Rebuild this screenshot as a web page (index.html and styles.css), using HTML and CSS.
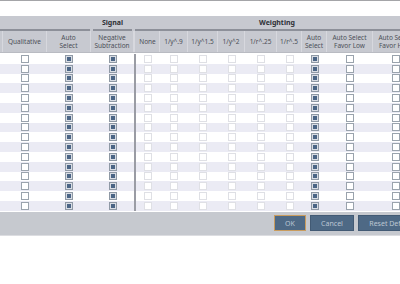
FILE: index.html
```html
<!DOCTYPE html>
<html lang="en">
<head>
  <meta charset="UTF-8" />
  <title>Calibration Settings</title>
  <link rel="stylesheet" href="styles.css">
</head>
<body>

<div class="dialog">
  <div class="top-gap"></div>

  <div class="head">
    <div class="groups">
      <div class="group group-first"></div>
      <div class="group group-signal">Signal</div>
      <div class="group-sep"></div>
      <div class="group group-weight">Weighting</div>
    </div>
    <div class="cols">
      <div class="col"></div>
      <div class="col">Qualitative</div>
      <div class="col">Auto<br>Select</div>
      <div class="col">Negative<br>Subtraction</div>
      <div class="col col-sep"></div>
      <div class="col">None</div>
      <div class="col">1/y^.9</div>
      <div class="col">1/y^1.5</div>
      <div class="col">1/y^2</div>
      <div class="col">1/r^.25</div>
      <div class="col">1/r^.5</div>
      <div class="col">Auto<br>Select</div>
      <div class="col">Auto Select<br>Favor Low</div>
      <div class="col">Auto Select<br>Favor High</div>
    </div>
  </div>

  <div class="rows" id="rows"></div>

  <div class="footer">
    <button class="btn btn-ok">OK</button>
    <button class="btn btn-cancel">Cancel</button>
    <button class="btn btn-reset">Reset Defaults</button>
  </div>
</div>

<script>
  const rows = document.getElementById('rows');
  // one entry per cell: '' empty, u unchecked, c checked, d disabled, s separator
  const cells = ['', 'u', 'c', 'c', 's', 'd', 'd', 'd', 'd', 'd', 'd', 'c', 'u', 'u'];

  for (let i = 0; i < 16; i++) {
    const row = document.createElement('div');
    row.className = 'row' + (i % 2 ? ' alt' : '');
    cells.forEach(type => {
      const cell = document.createElement('div');
      cell.className = type === 's' ? 'cell cell-sep' : 'cell';
      if (type && type !== 's') {
        const box = document.createElement('span');
        box.className = 'check ' + type;
        cell.appendChild(box);
      }
      row.appendChild(cell);
    });
    rows.appendChild(row);
  }
</script>

</body>
</html>
```

FILE: styles.css
```css
body {
  margin: 0;
  padding: 0;
  background: #fff;
  font-family: 'Noto Sans', 'Open Sans', sans-serif;
  overflow: hidden;
  height: 284px;
}

.dialog {
  width: 434px;
  border-top: 1px solid #a4a5a8;
}

.top-gap {
  height: 15px;
}

.head {
  background: #c7c9d0;
  border-bottom: 1px solid #b9bbc2;
}

.groups,
.cols,
.row {
  display: grid;
  grid-template-columns: 3px 44px 44px 43px 2px 24px 28px 30px 27px 32px 25px 25px 46px 46px;
}

.groups {
  height: 15px;
}

.group {
  height: 13px;
  border-bottom: 2px solid #8d9099;
  font-size: 7px;
  font-weight: bold;
  color: #2e3036;
  text-align: center;
  line-height: 14px;
}

.group-first {
  grid-column: 1 / 4;
  margin-right: 1px;
}

.group-signal {
  grid-column: 4 / 5;
  margin: 0 2px 0 2px;
}

.group-sep {
  grid-column: 5 / 6;
}

.group-weight {
  grid-column: 6 / 15;
  margin-left: -1px;
}

.cols {
  height: 21px;
}

.col {
  display: flex;
  align-items: center;
  justify-content: center;
  text-align: center;
  font-size: 6.5px;
  line-height: 7.5px;
  color: #4c4f57;
  border-right: 1px solid #d7d8de;
  white-space: nowrap;
}

.col-sep {
  border-right: none;
  border-left: 1px solid #d7d8de;
}

.rows {
  padding-top: 1px;
}

.row {
  height: 9.8px;
  background: #fff;
}

.row.alt {
  background: #ebebf4;
}

.cell {
  display: flex;
  align-items: center;
  justify-content: center;
}

.cell-sep {
  background: #9a9ca4;
}

.check {
  box-sizing: border-box;
  width: 8px;
  height: 8px;
  background: #fff;
  border: 1px solid #9aa3ad;
}

.check.d {
  border-color: #dfe0e5;
}

.check.c {
  border-color: #8f99a5;
  background: #4b6585;
  box-shadow: inset 0 0 0 1px #d9dde4;
}

.footer {
  display: flex;
  justify-content: flex-end;
  gap: 4px;
  height: 23px;
  padding: 0 6px 0 0;
  margin-top: 1px;
  align-items: center;
  background: #c6c9cf;
  border-bottom: 1px solid #dcdde1;
}

.btn {
  height: 16px;
  padding: 0;
  font-family: inherit;
  font-size: 7px;
  color: #bcc7d3;
  background: #4e6985;
  border: 1px solid #425a74;
}

.btn-ok {
  width: 32px;
  border-color: #c99c5e;
}

.btn-cancel {
  width: 44px;
}

.btn-reset {
  width: 70px;
}
```
